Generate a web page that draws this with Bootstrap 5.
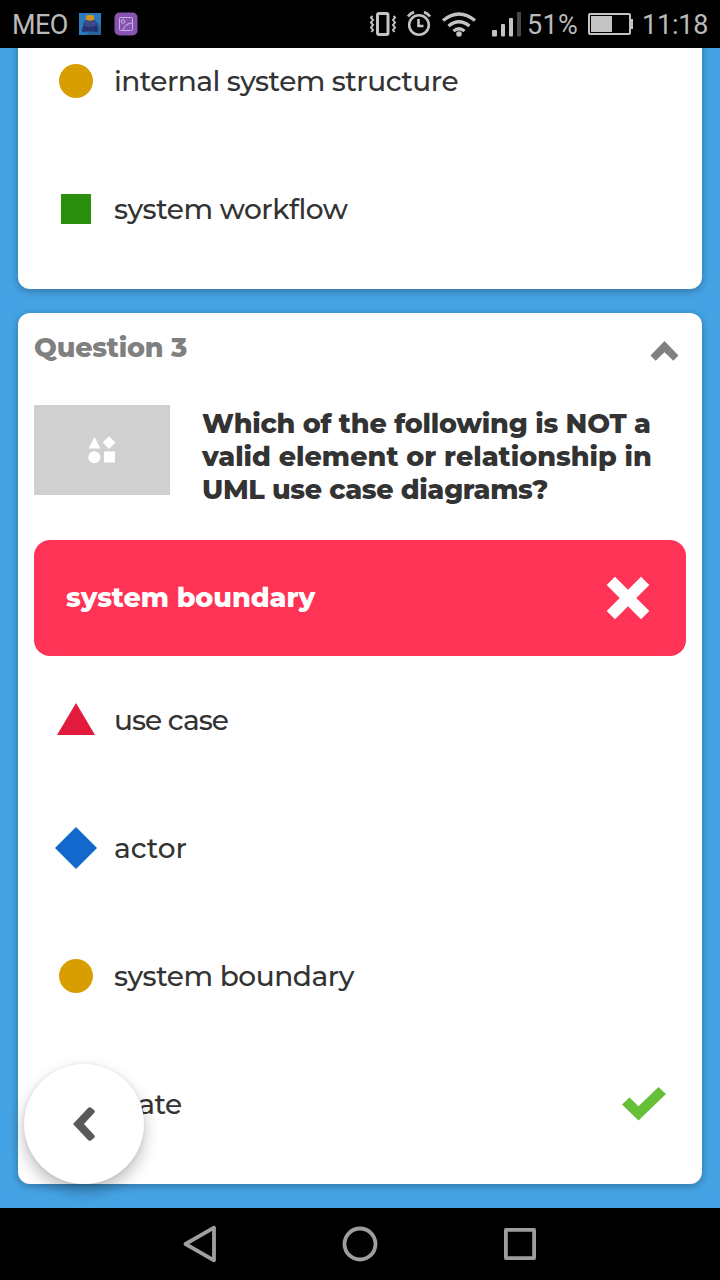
<!DOCTYPE html>
<html lang="en">
<head>
<meta charset="utf-8">
<meta name="viewport" content="width=device-width, initial-scale=1">
<title>Quiz results</title>
<link href="https://cdn.jsdelivr.net/npm/bootstrap@5.3.0/dist/css/bootstrap.min.css" rel="stylesheet">
<style>
body{margin:0;background:#000}
.phone{width:720px;height:1280px;font-family:Montserrat,Inter,"Open Sans",sans-serif;color:#333}
.status{height:48px;font:27px/48px Roboto,sans-serif;color:#bababa}
.status span{height:48px;padding-top:2px;line-height:46px;white-space:nowrap}
.carrier{margin-left:12px;width:66px;letter-spacing:-.6px}
.percent{margin-left:3px;width:59px;letter-spacing:.3px}
.clock{margin-left:8px;width:78px;letter-spacing:-.2px}
.screen{background:#45a3e5}
.quiz{margin:0 18px 24px;padding:16px;border:0;border-radius:12px;box-shadow:0 2px 8px rgba(0,0,0,.3);color:#333}
.quiz-prev{margin-top:-47px}
.answer{height:128px;padding-left:20px;padding-right:20px}
.shape{width:44px;height:44px}
.label{margin-left:16px;font-size:28px;font-weight:500;line-height:36px;padding-bottom:1px;white-space:nowrap;letter-spacing:-.45px}
.label-long{letter-spacing:-.54px}
.label-tight{letter-spacing:-.95px}
.label-wide{letter-spacing:-.1px}
.heading{padding-top:1px;font-size:27px;font-weight:800;line-height:36px;letter-spacing:-.2px;color:#808080}
.thumb{width:136px;height:90px;background:#d0d0d0}
.question{margin:2px 0 0 32px;font-size:27px;font-weight:800;line-height:33px}
.question span{display:block;white-space:nowrap;width:max-content;letter-spacing:-.23px}
.question .line-two{letter-spacing:0}
.question .line-three{letter-spacing:-.34px}
.wrong{height:116px;border-radius:16px;background:#ff3355;color:#fff;padding:0 32px;font-size:27px;font-weight:800;letter-spacing:-.06px}
.fab{left:24px;top:1016px;width:120px;height:120px;background:#fff;border-radius:50%;box-shadow:0 8px 16px rgba(0,0,0,.25),0 0 4px rgba(0,0,0,.08);padding:0;border:0}
.navkeys{height:72px}
</style>
</head>
<body>
<div class="phone d-flex flex-column overflow-hidden">
  <header class="status bg-black d-flex align-items-center flex-shrink-0">
    <span class="carrier">MEO</span>
    <svg width="60" height="48" viewBox="78 0 60 48">
      <rect x="79" y="13" width="22" height="22" fill="#2c7cbd"/>
      <path d="M97 22l4 4v9H86z" fill="#24679f"/>
      <path d="M85 26.500q-3.500 1-2 5h2M95 26.500q3.500 1 2 5h-2" stroke="#25306d" stroke-width="1.300" fill="none"/>
      <path d="M83.500 31.500q-1-10 3-11.500h7.500q4 1.500 3 11.500z" fill="#26306f"/>
      <path d="M83 22q7-3 14 0l-2 4q-5 2-10 0z" fill="#3c4a8d"/>
      <path d="M86 20v-3.500q0-1.500 2-1.500h4q2 0 2 2v3q-4 1.500-8 0" fill="#d6951d"/>
      <rect x="114.500" y="12.500" width="23" height="23" rx="5" fill="#8854b4"/>
      <rect x="119.500" y="17.500" width="13" height="13" rx="1" fill="none" stroke="#c7b3d9"/>
      <circle cx="123" cy="21.500" r="1.800" fill="none" stroke="#c7b3d9"/>
      <path d="M123 30q2-7 9-7M127 25.500l2-2" fill="none" stroke="#c7b3d9"/>
    </svg>
    <svg class="ms-auto" width="156" height="48" viewBox="368 0 156 48" fill="none" stroke="#c3c3c3" stroke-width="3">
      <rect x="377.500" y="13.500" width="10.500" height="21" rx="1.500"/>
      <path d="M372.500 16l-1.500 1.500 2 2.500-2 2.500 2 2.500-2 2.500 2 2.500-1.500 2M393.500 16l1.500 1.500-2 2.500 2 2.500-2 2.500 2 2.500-2 2.500 1.500 2" stroke-width="2"/>
      <circle cx="419" cy="25" r="9.800" stroke-width="2.600"/>
      <path d="M418.500 19v7h5" stroke-width="2.600"/>
      <path d="M408 16.500q2-3 6-4.300M430 16.500q-2-3-6-4.300" stroke-width="2.800"/>
      <path d="M443 20.500q16-13 32 0M448.500 26q10.500-8.500 21 0M453.500 31q5.500-4.500 11 0" stroke-width="3.200"/>
      <circle cx="459" cy="34" r="2.800" fill="#c3c3c3" stroke="none"/>
      <g stroke="none" fill="#c3c3c3"><rect x="492" y="30" width="5" height="6.500" rx="1"/><rect x="501" y="24" width="4" height="12.500" rx="1"/><rect x="509" y="18" width="4" height="18.500" rx="1"/><rect x="517" y="12" width="4" height="24.500" rx="1" fill="#484848"/></g>
    </svg>
    <span class="percent">51%</span>
    <svg width="48" height="48" viewBox="586 0 48 48"><rect x="589" y="14" width="41" height="20" rx="1" fill="none" stroke="#c3c3c3" stroke-width="2"/><path d="M591 16h21v16h-21zM631 19h2v10h-2z" fill="#c3c3c3"/></svg>
    <span class="clock">11:18</span>
  </header>

  <main class="screen position-relative flex-fill overflow-hidden">
    <section class="card quiz quiz-prev">
      <div class="answer d-flex align-items-center">
        <svg class="shape" viewBox="0 0 44 44"><circle cx="22" cy="22" r="17" fill="#d89e00"/></svg>
        <span class="label label-long">internal system structure</span>
      </div>
      <div class="answer d-flex align-items-center">
        <svg class="shape" viewBox="0 0 44 44"><path d="M7 7h30v30H7z" fill="#298f0d"/></svg>
        <span class="label">system workflow</span>
      </div>
    </section>

    <section class="card quiz">
      <div class="d-flex justify-content-between" style="height:76px">
        <span class="heading">Question 3</span>
        <svg width="28" height="20" viewBox="0 0 28 20" style="margin:12px 8px 0 0"><path d="M14.500 0l14 14.500-5.200 5.200-8.800-8.400-8.800 8.400L.5 14.500z" fill="#808080"/></svg>
      </div>
      <div class="d-flex align-items-start" style="height:135px">
        <div class="thumb d-flex align-items-center justify-content-center flex-shrink-0">
          <svg width="28" height="28" viewBox="0 0 28 28" fill="#fff"><path d="M6.500 1l6 11.500H.5zM21 .3l6.300 6.300-6.300 6.300-6.300-6.300zM16 15.500h11v11H16z"/><circle cx="6.300" cy="21.300" r="6"/></svg>
        </div>
        <div class="question"><span>Which of the following is NOT a</span><span class="line-two">valid element or relationship in</span><span class="line-three">UML use case diagrams?</span></div>
      </div>
      <div class="wrong d-flex align-items-center justify-content-between">
        <span>system boundary</span>
        <svg width="44" height="44" viewBox="0 0 44 44" style="margin-right:4px"><path d="M.7 9L9 .7l13 13 13-13L43.300 9l-13 13 13 13-8.300 8.300-13-13-13 13L.7 35l13-13z" fill="#fff"/></svg>
      </div>
      <div class="answer d-flex align-items-center">
        <svg class="shape" viewBox="0 0 44 44"><path d="M22 5l19 32H3z" fill="#e21b3c"/></svg>
        <span class="label label-tight">use case</span>
      </div>
      <div class="answer d-flex align-items-center">
        <svg class="shape" viewBox="0 0 44 44"><path d="M22 1l21 21-21 21L1 22z" fill="#1368ce"/></svg>
        <span class="label label-wide">actor</span>
      </div>
      <div class="answer d-flex align-items-center">
        <svg class="shape" viewBox="0 0 44 44"><circle cx="22" cy="22" r="17" fill="#d89e00"/></svg>
        <span class="label">system boundary</span>
      </div>
      <div class="answer d-flex align-items-center">
        <svg class="shape" viewBox="0 0 44 44"><path d="M7 7h30v30H7z" fill="#298f0d"/></svg>
        <span class="label">state</span>
        <svg class="ms-auto" width="44" height="34" viewBox="0 0 44 34"><path d="M0 17.500l7.500-7 9 8.700L36.500 0 44 7 16.500 33.500z" fill="#66bf39"/></svg>
      </div>
    </section>
    <button class="fab position-absolute d-flex align-items-center justify-content-center" aria-label="Back">
      <svg width="24" height="36" viewBox="0 0 24 36"><path d="M1 18L16.300 1.800q1.500-1.300 3 0l3 2.500q1.200 1.200 0 2.500L12 18l10.300 11.200q1.200 1.300 0 2.500l-3 2.500q-1.500 1.300-3 0z" fill="#5a5a5a"/></svg>
    </button>
  </main>

  <footer class="navkeys bg-black flex-shrink-0 d-flex justify-content-center">
    <svg width="360" height="72" viewBox="180 1208 360 72" fill="none" stroke="#9e9e9e" stroke-width="3.800" stroke-linejoin="round"><path d="M185.500 1244l28.500-16.300v32.600z"/><circle cx="360" cy="1244" r="15.500"/><rect x="505.900" y="1229.900" width="28.200" height="28.200"/></svg>
  </footer>
</div>
<script src="https://cdn.jsdelivr.net/npm/bootstrap@5.3.0/dist/js/bootstrap.bundle.min.js"></script>
</body>
</html>
